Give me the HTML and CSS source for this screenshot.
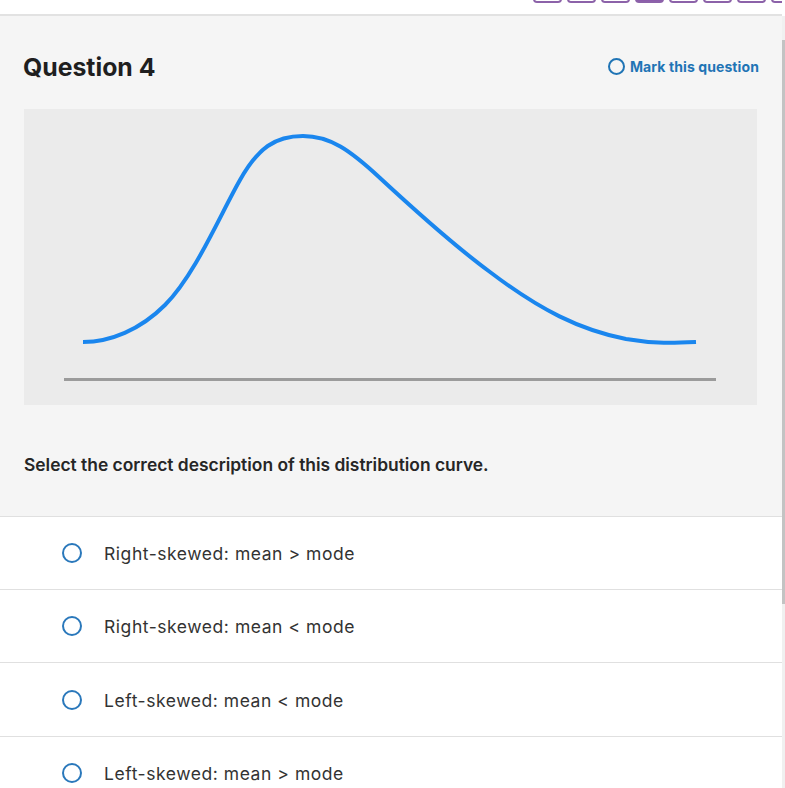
FILE: index.html
```html
<!DOCTYPE html>
<html>
<head>
<meta charset="utf-8">
<link rel="stylesheet" href="styles.css">
</head>
<body>
<div class="page">
  <div class="topbar">
    <div class="pager">
      <span class="pg"></span><span class="pg"></span><span class="pg"></span><span class="pg pg-on"></span><span class="pg"></span><span class="pg"></span><span class="pg"></span><span class="pg"></span>
    </div>
  </div>
  <div class="question">
    <div class="qhead">
      <h1 class="qtitle">Question 4</h1>
      <div class="mark"><span class="mark-circle"></span>Mark this question</div>
    </div>
    <div class="graph">
      <svg class="graph-svg" viewBox="24 109 733 296" width="733" height="296">
        <line x1="64" y1="379.5" x2="716" y2="379.5" stroke="#9b9b9b" stroke-width="3"/>
        <path d="M83,342 C110,342 140,330 165,305 C195,275 220,215 240,180 C258,148 275,136 303,136 C330,136 350,150 380,178 C420,215 460,250 490,272 C540,310 580,330 626,339 C655,344 675,343 696,342" fill="none" stroke="#1a86ee" stroke-width="4"/>
      </svg>
    </div>
    <p class="prompt">Select the correct description of this distribution curve.</p>
  </div>
  <div class="options">
    <div class="opt"><span class="radio"></span><span class="opt-text">Right-skewed: mean &gt; mode</span></div>
    <div class="opt"><span class="radio"></span><span class="opt-text">Right-skewed: mean &lt; mode</span></div>
    <div class="opt"><span class="radio"></span><span class="opt-text">Left-skewed: mean &lt; mode</span></div>
    <div class="opt"><span class="radio"></span><span class="opt-text">Left-skewed: mean &gt; mode</span></div>
  </div>
  <div class="scrollbar"><div class="thumb"></div></div>
</div>
</body>
</html>
```

FILE: styles.css
```css
html, body {
  margin: 0;
  padding: 0;
  background: #ffffff;
  overflow: hidden;
}
.page {
  width: 782px;
  font-family: "Inter", "Noto Sans", sans-serif;
  color: #222;
}
.topbar {
  height: 14px;
  overflow: hidden;
  border-bottom: 2px solid #e2e2e2;
  background: #fff;
}
.pager {
  display: flex;
  gap: 5px;
  margin-left: 533px;
  margin-top: -18px;
}
.pg {
  width: 29px;
  height: 21px;
  flex: none;
  box-sizing: border-box;
  border: 2px solid #8c62a9;
  border-radius: 4px;
}
.pg-on {
  background: #8c5cab;
}
.question {
  background: #f5f5f5;
  padding: 35px 25px 39px 24px;
}
.qhead {
  display: flex;
  justify-content: space-between;
  align-items: center;
  height: 30px;
}
.qtitle {
  margin: 1px 0 0 -1px;
  font-size: 24.8px;
  font-weight: 700;
  color: #1f1f1f;
}
.mark {
  display: flex;
  align-items: center;
  gap: 5px;
  font-size: 14px;
  font-weight: 700;
  color: #1f74b5;
  margin-right: -2px;
  letter-spacing: 0.1px;
}
.mark-circle {
  width: 17px;
  height: 17px;
  box-sizing: border-box;
  border: 2px solid #1f74b5;
  border-radius: 50%;
}
.graph {
  margin-top: 28px;
  width: 733px;
  height: 296px;
  background: #ebebeb;
}
.graph-svg {
  display: block;
}
.prompt {
  margin: 48px 0 0 0;
  line-height: 24px;
  font-size: 17.4px;
  font-weight: 600;
  color: #262626;
}
.options {
  border-top: 1px solid #e0e0e0;
}
.opt {
  display: flex;
  align-items: center;
  height: 72px;
  border-bottom: 1px solid #e0e0e0;
  padding-left: 62px;
}
.opt:nth-child(3) {
  height: 73px;
}
.radio {
  width: 20px;
  height: 20px;
  box-sizing: border-box;
  border: 2px solid #2a78bb;
  border-radius: 50%;
  flex: none;
}
.opt-text {
  margin: 1px 0 0 22px;
  font-size: 17.5px;
  letter-spacing: 0.55px;
  color: #333;
}
.scrollbar {
  position: fixed;
  top: 16px;
  right: 0;
  width: 3px;
  height: 772px;
  background: #f0f0f0;
}
.thumb {
  margin-top: 24px;
  height: 564px;
  background: #c3c3c3;
}
```
